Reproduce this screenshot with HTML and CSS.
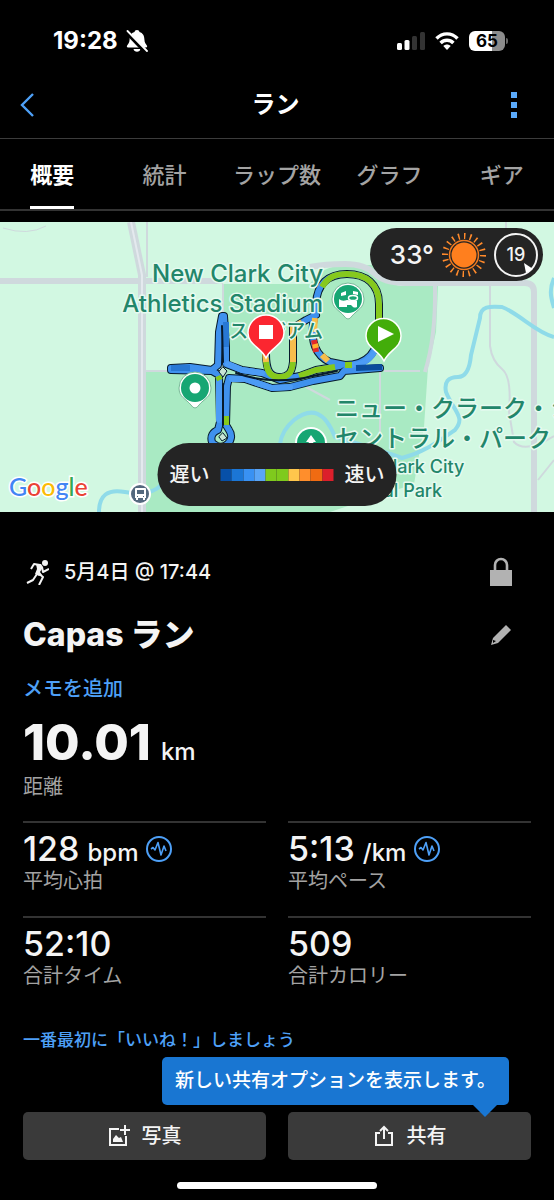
FILE: index.html
```html
<!DOCTYPE html>
<html lang="ja">
<head>
    <meta charset="UTF-8">
    <meta name="viewport" content="width=device-width, initial-scale=1.0">
    <title>Capas ラン</title>
    <link rel="stylesheet" href="styles.css">
</head>
<body>
    <div class="status-bar">
        <div class="status-left">
            <span class="clock">19:28</span>
            <svg width="22" height="24" viewBox="0 0 22 24">
                <path d="M11 1c-1.500 0-2.300.9-2.500 2C5 4 3.700 7 3.600 10.500c-.1 3.500-1.600 4.500-2.600 6.300-.4.900 0 1.700 1 1.700h18c1 0 1.400-.8 1-1.700-1-1.800-2.500-2.800-2.600-6.300C18.300 7 17 4 13.500 3c-.2-1.100-1-2-2.500-2z" fill="#fff"/>
                <path d="M7.500 20h7c-.4 1.700-1.700 2.700-3.500 2.700S7.900 21.700 7.500 20z" fill="#fff"/>
                <path d="M0 2.500L20 23.500" stroke="#000" stroke-width="4"/>
                <path d="M1.500 2L21 22" stroke="#fff" stroke-width="1.800" stroke-linecap="round"/>
            </svg>
        </div>
        <div class="status-right">
            <svg width="28" height="18" viewBox="0 0 28 18">
                <rect x="0" y="11" width="5" height="7" rx="1.500" fill="#fff"/>
                <rect x="7.500" y="8" width="5" height="10" rx="1.500" fill="#fff"/>
                <rect x="15" y="4" width="5" height="14" rx="1.500" fill="#333"/>
                <rect x="23" y="0" width="5" height="18" rx="1.500" fill="#333"/>
            </svg>
            <svg width="24" height="18" viewBox="0 0 24 18">
                <g fill="none" stroke="#fff" stroke-width="3.400">
                    <path d="M1.500 6.500C7.500.3 16.500.3 22.500 6.500"/>
                    <path d="M5.600 11C9.200 7.300 14.800 7.300 18.400 11"/>
                </g>
                <path d="M12 18l-3.700-4c2.200-2 5.200-2 7.400 0z" fill="#fff"/>
            </svg>
            <div class="battery"><span>65</span></div>
        </div>
    </div>

    <header class="nav-bar">
        <button class="icon-button" aria-label="戻る">
            <svg width="16" height="26" viewBox="0 0 16 26"><path d="M14 2L3 13l11 11" fill="none" stroke="#4ea0f7" stroke-width="2.400"/></svg>
        </button>
        <h1>ラン</h1>
        <button class="icon-button" aria-label="メニュー">
            <svg width="6" height="26" viewBox="0 0 6 26"><path d="M0 0h6v6H0zM0 10h6v6H0zM0 20h6v6H0z" fill="#5aa9fa"/></svg>
        </button>
    </header>

    <nav class="tabs">
        <a href="#" class="active">概要</a>
        <a href="#">統計</a>
        <a href="#">ラップ数</a>
        <a href="#">グラフ</a>
        <a href="#">ギア</a>
    </nav>

    <section class="map">
        <svg class="map-canvas" viewBox="0 0 554 290" preserveAspectRatio="xMidYMid slice">
            <rect width="554" height="290" fill="#d2f8e2"/>
            <!-- park -->
            <path d="M223 62H310Q320 44 346 43H374Q388 62 400 64H438L436 110 428 145 424 205 414 262 330 290H145V149H223z" fill="#a9eac3"/>

            <!-- roads -->
            <g fill="none" stroke="#cfd9dd">
                <path d="M0 59H223" stroke-width="6"/>
                <path d="M131 0L142 53V290" stroke-width="8"/>
                <path d="M131 0L142 53V290" stroke="#e4e9ee" stroke-width="2"/>
                <path d="M147 0V55M145 149H175M223 62V90" stroke-width="2"/>
                <path d="M310 45Q325 42 345 42T375 52T410 61H525Q534 61 534 70V290" stroke-width="6"/>
                <path d="M435 64Q436 115 425 150" stroke-width="4"/>
                <path d="M506 0V8M490 61V124Q492 139 502 147T509 190L514 220Q525 232 554 214M384 149H420M380 149V215M306 165L330 178M554 238L538 258" stroke-width="2"/>
                <path d="M3 6Q28 14 46 4" stroke-width="1"/>
            </g>
            <circle cx="-4" cy="37" r="4" fill="#7faf98"/>

            <!-- rivers -->
            <g fill="none" stroke="#8fdbe9" stroke-width="4">
                <path d="M554 56C548 70 552 78 554 86"/>
                <path d="M554 115C535 110 520 92 502 85C490 84 480 84 480 96L471 133Q469 155 458 155Q443 155 446 170C454 190 466 195 455 208C440 218 425 230 402 236Q380 228 335 215C325 190 312 184 294 198Q282 208 280 222"/>
                <path d="M99 290Q99 265 125 270T162 262"/>
            </g>

            <!-- route: black casing, then pace colours -->
            <g fill="none" stroke-linejoin="round" stroke-linecap="round">
                <g stroke="#071a2c" stroke-width="8">
                    <path id="spur" d="M171 146L190 145 212 148 218 143 219 110 222 94 224 94 226 125 226 142 242 148 262 151 280 158 300 154 316 148 340 144"/>
                    <path id="south" d="M171 148L212 149 219 153 220 200 218 208 C213 210 210 214 212 220M214 222C224 230 236 218 229 208L226 203 227 164 229 156 245 157 272 166 290 165 313 159 340 154 344 149 380 146"/>
                    <path id="track" d="M345 143C370 143 379 127 379 105V82C379 62 366 52 347 52C328 52 317 62 316 82L313 102C311 118 315 134 330 140z"/>
                    <path id="hook" d="M266 132C266 148 270 155 279 155C290 155 292 149 293 140V106L306 98 316 93"/>
                </g>
                <g stroke="#3f91ee" stroke-width="6">
                    <use href="#spur"/>
                    <use href="#south"/>
                    <use href="#track"/>
                    <use href="#hook"/>
                </g>
                <g stroke="#4c9cf5" stroke-width="6">
                    <path d="M219 160V198M228 142L242 148 262 151M379 112C379 127 370 143 352 143M232 157L245 157 272 166 290 165"/>
                </g>
                <g stroke-width="6" stroke-linecap="butt">
                    <path d="M171 146H190M226 100V125" stroke="#2878d4"/>
                    <path d="M322 65C328 55 335 52 347 52C366 52 379 62 379 82V108" stroke="#86c91d"/>
                    <path d="M266 136C266 148 270 155 279 155C290 155 292 149 293 140" stroke="#86c91d"/>
                    <path d="M265 130L266 140M293 140V106L302 100M315 96L314 110M322 133L328 139" stroke="#f8bd4c"/>
                    <path d="M314 118L316 130" stroke="#e02a2a"/>
                    <path d="M315 122L316 126" stroke="#ffb02e"/>
                    <path d="M299 154L316 148 335 145M345 143H352M226 194V203M218 154L220 158" stroke="#86c91d"/>
                    <path d="M356 146L382 145" stroke="#0b4d9b"/>
                </g>
                <path d="M222 104L223 140M223 162V203M236 151Q272 164 313 154L337 149" stroke="#071a2c" stroke-width="2"/>
                <path d="M223 145L227 149 223 155 219 150zM223 211L227 216 222 219 219 215z" fill="#c8e5d5" stroke="#071a2c"/>
            </g>

            <g class="place">
                <text x="323" y="60" text-anchor="end" font-size="24">New Clark City</text>
                <text x="323" y="90" text-anchor="end" font-size="24">Athletics Stadium</text>
                <text x="323" y="116" text-anchor="end" font-size="19">スタジアム</text>
                <text x="335" y="195" font-size="24">ニュー・クラーク・シティ</text>
                <text x="335" y="225" font-size="24">セントラル・パーク</text>
                <text x="336" y="251" font-size="18">New Clark City</text>
                <text x="336" y="275" font-size="18">Central Park</text>
            </g>

            <!-- place markers -->
            <path d="M195 150a16 16 0 0 1 16 16c0 9-7 11-12 17q-4 6-8 0c-5-6-12-8-12-17a16 16 0 0 1 16-16z" fill="#fff" stroke="#79b998"/>
            <circle cx="195" cy="166" r="14" fill="#17a673"/>
            <circle cx="195" cy="166" r="5.500" fill="#fff"/>
            <path d="M348 61a16 16 0 0 1 16 16c0 9-7 11-12 17q-4 6-8 0c-5-6-12-8-12-17a16 16 0 0 1 16-16z" fill="#fff" stroke="#79b998"/>
            <circle cx="348" cy="77" r="14" fill="#17a673"/>
            <path d="M339 77q3 3 8 1l10 1v6q-2 1-4 0l-2-2h-4v2h-8zM341 71l5-2v4l-5 1zM353 69l5 1v3l-5-1z" fill="#fff"/>
            <ellipse cx="353" cy="76" rx="4.500" ry="2.500" fill="#17a673" stroke="#fff" stroke-width="1.500"/>
            <circle cx="311" cy="221" r="16" fill="#fff"/>
            <circle cx="311" cy="221" r="14" fill="#17a673"/>
            <path d="M311 213l5 7h-3l3 5h-10l3-5h-3z" fill="#fff"/>
            <circle cx="140" cy="272" r="11" fill="#fff"/>
            <circle cx="140" cy="272" r="9" fill="#54697e"/>
            <path d="M136 266h9q1 0 1 1v9h-1v2h-2v-2h-5v2h-2v-2h-1v-9q0-1 1-1z" fill="#fff"/>
            <path d="M137 268h7v4h-7zM137 274h1v1h-1zM143 274h1v1h-1z" fill="#54697e"/>

            <!-- finish and start pins -->
            <path d="M266 136C261 125 248 123 248 111a18 18 0 0 1 36 0C284 123 271 125 266 136z" fill="#fb2630" stroke="#fff" stroke-width="1.500"/>
            <path d="M259 103h14v14h-14z" fill="#fff"/>
            <path d="M384 139C379 128 366 126 366 114a17.500 17.500 0 0 1 35 0C401 126 389 128 384 139z" fill="#43ad0a" stroke="#fff" stroke-width="1.500"/>
            <path d="M378 104l16 8-16 8z" fill="#fff"/>

            <text class="google" x="9" y="274"><tspan fill="#4285f4">G</tspan><tspan fill="#ea4335">o</tspan><tspan fill="#fbbc05">o</tspan><tspan fill="#4285f4">g</tspan><tspan fill="#34a853">l</tspan><tspan fill="#ea4335">e</tspan></text>
        </svg>

        <div class="weather">
            <span>33°</span>
            <svg width="44" height="44" viewBox="-22 -22 44 44">
                <circle r="12.500" fill="#ff7f1e"/>
                <circle r="14.500" fill="none" stroke="#f07a20" stroke-width="1.500"/>
                <circle r="19" fill="none" stroke="#ff8a2b" stroke-width="6" stroke-dasharray="1.500 4.469" pathLength="119.380"/>
            </svg>
            <svg width="44" height="44" viewBox="0 0 44 44">
                <circle cx="22" cy="22" r="21" fill="none" stroke="#f4f4f4" stroke-width="2"/>
                <path d="M30 30l9 6-7 4z" fill="#fff"/>
                <text class="wind" x="22" y="28" text-anchor="middle">19</text>
            </svg>
        </div>

        <div class="legend">
            <span>遅い</span>
            <div class="scale"><i class="p1"></i><i class="p2"></i><i class="p3"></i><i class="p4"></i><i class="p5"></i><i class="p5"></i><i class="p6"></i><i class="p7"></i><i class="p8"></i><i class="p9"></i></div>
            <span>速い</span>
        </div>
    </section>

    <main>
        <div class="row date-row">
            <svg width="26" height="26" viewBox="0 0 26 26">
                <circle cx="22" cy="4" r="3" fill="#f4f4f4"/>
                <path d="M17 6l-6-1-3 5M19 8l1 5 6-3M14 15l-4 6-6 3M15 14l5 4-4 8" fill="none" stroke="#f4f4f4" stroke-width="2" stroke-linejoin="round"/>
                <path d="M13 5l5 0 2 3-3 5 2 3-3 1-4-2 2-5z" fill="#f4f4f4"/>
            </svg>
            <time>5月4日 @ 17:44</time>
            <button class="icon-button" aria-label="プライバシー">
                <svg width="24" height="30" viewBox="0 0 24 30"><path d="M1 13h22v16H1z" fill="#b2b2b2"/><path d="M6 14V8a6 6 0 0 1 12 0v6" fill="none" stroke="#b2b2b2" stroke-width="2.600"/></svg>
            </button>
        </div>
        <div class="row title-row">
            <h2>Capas ラン</h2>
            <button class="icon-button" aria-label="編集">
                <svg width="24" height="24" viewBox="0 0 24 24"><path d="M2 22l2-7L17 2l5 5L9 20z" fill="#b2b2b2"/><path d="M4 17l3 1-3 2z" fill="#000"/></svg>
            </button>
        </div>
        <a class="note" href="#">メモを追加</a>

        <div class="distance"><strong>10.01</strong><span>km</span></div>
        <div class="label">距離</div>

        <div class="stats">
            <div class="stat">
                <div class="value">128 <small>bpm</small>
                    <svg width="26" height="26" viewBox="0 0 26 26"><g fill="none" stroke="#4ea0f7"><circle cx="13" cy="13" r="12" stroke-width="2"/><path d="M5 13l2-1.500 2 2.500 3-7.500L15 19l3-9 2 5" stroke-width="1.600" stroke-linejoin="round"/></g></svg>
                </div>
                <div class="label">平均心拍</div>
            </div>
            <div class="stat">
                <div class="value">5:13 <small>/km</small>
                    <svg width="26" height="26" viewBox="0 0 26 26"><g fill="none" stroke="#4ea0f7"><circle cx="13" cy="13" r="12" stroke-width="2"/><path d="M5 13l2-1.500 2 2.500 3-7.500L15 19l3-9 2 5" stroke-width="1.600" stroke-linejoin="round"/></g></svg>
                </div>
                <div class="label">平均ペース</div>
            </div>
            <div class="stat">
                <div class="value">52:10</div>
                <div class="label">合計タイム</div>
            </div>
            <div class="stat">
                <div class="value">509</div>
                <div class="label">合計カロリー</div>
            </div>
        </div>

        <a class="like" href="#">一番最初に「いいね！」しましょう</a>

        <div class="actions">
            <button class="action">
                <svg width="22" height="22" viewBox="0 0 22 22"><path d="M11 4H2v16h16v-9M17 0v10M12 5h10" fill="none" stroke="#f4f4f4" stroke-width="2"/><path d="M5 17v-3l3-4 3 3 2-1 2 5z" fill="#f4f4f4"/></svg>
                写真
            </button>
            <button class="action">
                <svg width="22" height="22" viewBox="0 0 22 22"><path d="M7 8H3v12h16V8h-4M11 14V2M7 6l4-4 4 4" fill="none" stroke="#f4f4f4" stroke-width="2"/></svg>
                共有
            </button>
            <div class="tooltip" role="tooltip">新しい共有オプションを表示します。</div>
        </div>
    </main>
    <div class="home-indicator"></div>
</body>
</html>
```
FILE: styles.css
```css
* {
    box-sizing: border-box;
}
body {
    margin: 0;
    background-color: #000;
    color: #f4f4f4;
    font-family: Inter, "Noto Sans CJK JP", sans-serif;
    font-size: 20px;
    line-height: 24px;
    overflow-x: hidden;
}
svg {
    display: block;
    flex: none;
}
a {
    color: #4ea0f7;
    text-decoration: none;
}
button {
    font: inherit;
    color: inherit;
    border: none;
    cursor: pointer;
}
.icon-button {
    padding: 0;
    background: none;
}

/* status bar */
.status-bar {
    display: flex;
    justify-content: space-between;
    align-items: center;
    height: 72px;
    padding: 10px 46px 0 53px;
}
.status-left, .status-right {
    display: flex;
    align-items: center;
}
.status-left {
    gap: 8px;
}
.status-right {
    gap: 10px;
}
.clock {
    font-size: 24px;
    font-weight: 700;
    color: #fff;
}
.battery {
    position: relative;
    width: 36px;
    height: 20px;
    margin-right: 3px;
    border-radius: 6px;
    background: linear-gradient(to right, #fff 65%, #8c8c8c 65%);
    color: #000;
    font-size: 17px;
    font-weight: 700;
    line-height: 20px;
    text-align: center;
}
.battery::after {
    content: "";
    position: absolute;
    top: 7px;
    right: -3px;
    width: 2px;
    height: 6px;
    border-radius: 0 2px 2px 0;
    background-color: #666;
}

/* header */
.nav-bar {
    display: flex;
    justify-content: space-between;
    align-items: center;
    height: 66px;
    padding: 0 37px 0 19px;
}
.nav-bar h1 {
    margin: 0;
    padding-left: 5px;
    font-size: 24px;
    line-height: 28px;
    color: #fff;
}
.tabs {
    display: grid;
    grid-template-columns: repeat(5, 1fr);
    height: 73px;
    margin: 0 -4px 11px;
    border-top: 1px solid #3c3c3c;
    border-bottom: 2px solid #333;
}
.tabs a {
    display: flex;
    align-items: center;
    justify-self: center;
    padding-top: 5px;
    border-bottom: 3px solid transparent;
    color: #a3a3a3;
    font-size: 22px;
    font-weight: 500;
    white-space: nowrap;
}
.tabs .active {
    color: #fff;
    font-weight: 700;
    border-color: #fff;
}

/* map */
.map {
    position: relative;
}
.map-canvas {
    width: 100%;
    height: 290px;
}
.place text {
    fill: #22866a;
    font-weight: 500;
    stroke: #e6faf0;
    stroke-width: 3px;
    stroke-linejoin: round;
    paint-order: stroke;
}
.google {
    font-family: Lato, sans-serif;
    font-size: 25px;
    font-weight: 500;
    stroke: #fff;
    stroke-width: 3px;
    paint-order: stroke;
}
.weather, .legend {
    position: absolute;
    display: flex;
    align-items: center;
    background-color: #242424;
    border-radius: 32px;
}
.weather {
    top: 6px;
    right: 11px;
    gap: 8px;
    height: 53px;
    padding: 0 5px 0 20px;
    font-size: 26px;
    font-weight: 500;
}
.wind {
    fill: #f4f4f4;
    font-size: 18px;
}
.legend {
    bottom: 6px;
    left: 50%;
    gap: 11px;
    height: 63px;
    padding: 0 12px;
    transform: translateX(-50%);
    font-weight: 500;
    white-space: nowrap;
}
.scale {
    display: flex;
    width: 113px;
    height: 12px;
}
.scale i {
    flex: 1;
}
.p1 { background-color: #0750a8; }
.p2 { background-color: #1b76d6; }
.p3 { background-color: #3991f3; }
.p4 { background-color: #5aa5f7; }
.p5 { background-color: #7fca1d; }
.p6 { background-color: #ffc64c; }
.p7 { background-color: #ff8e2c; }
.p8 { background-color: #f06b12; }
.p9 { background-color: #dc1f2b; }

/* summary */
main {
    padding: 40px 23px 0;
}
.row {
    display: flex;
    align-items: center;
    padding-right: 18px;
}
.row .icon-button {
    margin-left: auto;
}
.date-row {
    height: 40px;
    gap: 15px;
    font-weight: 500;
}
.title-row {
    height: 85px;
}
.title-row h2 {
    margin: 0;
    font-size: 32px;
    font-weight: 800;
    line-height: 40px;
}
.note {
    display: block;
    width: max-content;
    font-weight: 500;
}
.distance {
    display: flex;
    align-items: baseline;
    gap: 10px;
    margin-top: 18px;
    font-size: 24px;
    font-weight: 500;
    line-height: 46px;
}
.distance strong {
    font-size: 50px;
    font-weight: 800;
}
.label {
    color: #a3a3a3;
}
.stats {
    display: grid;
    grid-template-columns: 1fr 1fr;
    column-gap: 22px;
    margin-top: 22px;
}
.stat {
    height: 95px;
    padding-top: 6px;
    border-top: 2px solid #333;
}
.value {
    display: flex;
    align-items: baseline;
    gap: 8px;
    height: 40px;
    font-size: 34px;
    font-weight: 500;
    line-height: 40px;
}
.value small {
    font-size: 24px;
}
.value svg {
    align-self: center;
}
.like {
    display: block;
    width: max-content;
    margin-top: 17px;
    font-size: 17px;
    font-weight: 500;
}
.actions {
    position: relative;
    display: grid;
    grid-template-columns: 1fr 1fr;
    column-gap: 22px;
    margin-top: 60px;
}
.action {
    display: flex;
    justify-content: center;
    align-items: center;
    gap: 12px;
    height: 48px;
    padding: 0;
    border-radius: 5px;
    background-color: #3a3a3a;
    font-weight: 500;
}
.tooltip {
    position: absolute;
    right: 22px;
    bottom: 55px;
    height: 48px;
    padding: 0 13px;
    border-radius: 5px;
    background-color: #1976d2;
    color: #fff;
    font-size: 19px;
    font-weight: 500;
    line-height: 48px;
    white-space: nowrap;
}
.tooltip::after {
    content: "";
    position: absolute;
    top: 100%;
    right: 12px;
    border: 12px solid transparent;
    border-top-color: #1976d2;
    border-bottom: none;
}
.home-indicator {
    width: 36%;
    height: 7px;
    margin: 22px auto 11px;
    border-radius: 4px;
    background-color: #fff;
}
```
